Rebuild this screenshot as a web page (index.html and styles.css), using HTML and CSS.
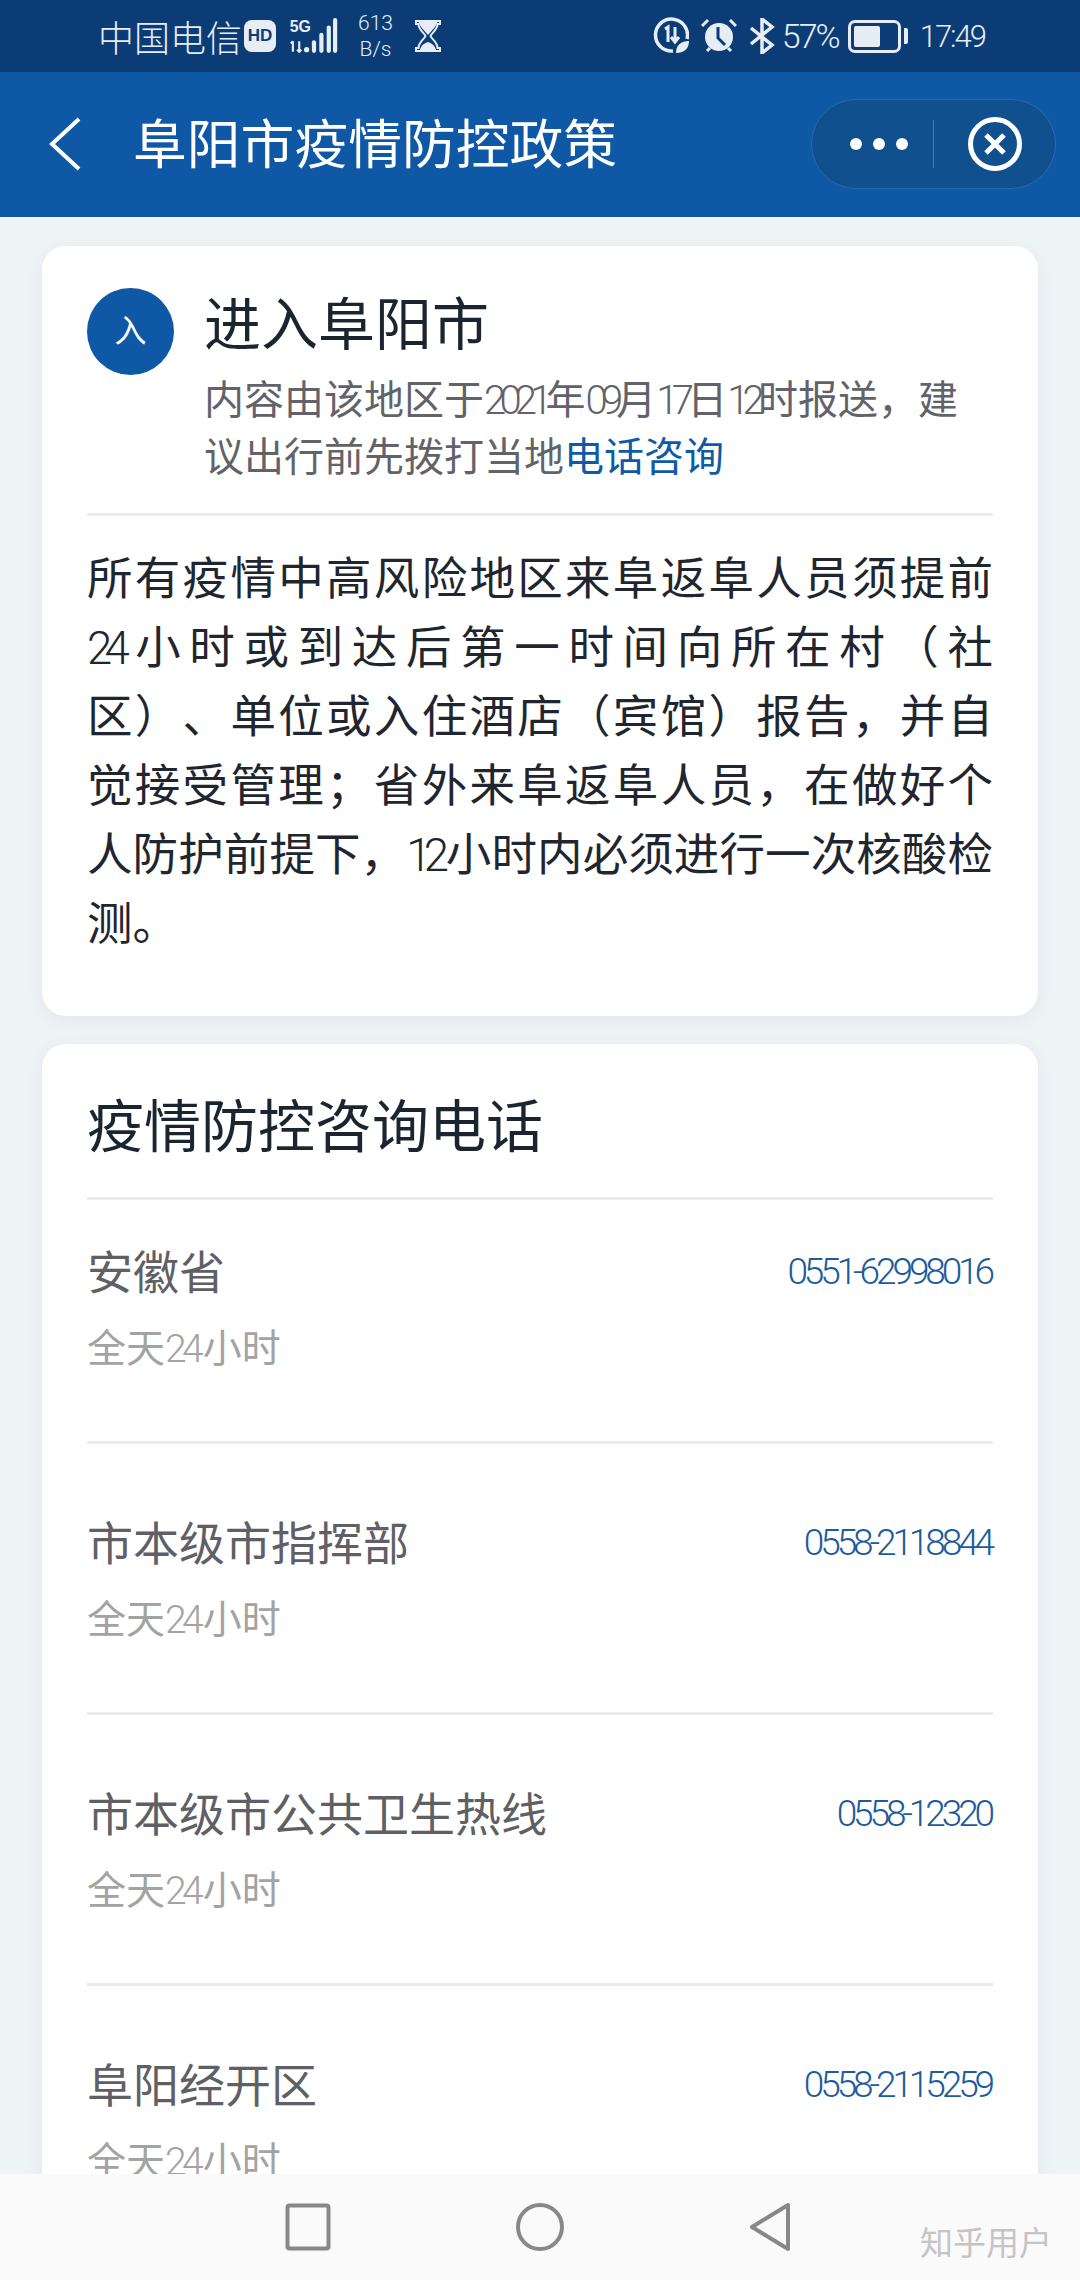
FILE: index.html
```html
<!DOCTYPE html>
<html lang="zh-CN">
<head>
    <meta charset="UTF-8">
    <title>阜阳市疫情防控政策</title>
    <link rel="stylesheet" href="styles.css">
</head>
<body>
<div class="statusbar">
    <div class="status-left">
        <span class="carrier">中国电信</span>
        <span class="hd">HD</span>
        <svg class="signal" width="52" height="38" viewBox="0 0 46 36">
            <text x="0" y="14" class="sig-text">5G</text>
            <path d="M3 23v10M1 25l2-2M9 23v10M7 31l2 2 2-2" stroke="#e6edf5" stroke-width="2" fill="none"/>
            <circle cx="16" cy="31" r="2.5" fill="#e6edf5"/>
            <rect x="21" y="22" width="4" height="12" rx="2" fill="#e6edf5"/>
            <rect x="28" y="15" width="4" height="19" rx="2" fill="#e6edf5"/>
            <rect x="35" y="8" width="4" height="26" rx="2" fill="#e6edf5"/>
            <rect x="41" y="1" width="4" height="33" rx="2" fill="#e6edf5"/>
        </svg>
        <span class="speed"><span>613</span><span>B/s</span></span>
        <svg width="26" height="34" viewBox="0 0 26 34">
            <path d="M1 2h24v3h-2.500c0 6-6 9-7 12 1 3 7 6 7 12h2.500v3h-24v-3h2.500c0-6 6-9 7-12-1-3-7-6-7-12h-2.500z" fill="none" stroke="#e6edf5" stroke-width="2"/>
            <path d="M3 2h20l-3 6-7 8-7-8zM5 31c1-5 5-7 8-8 3 1 7 3 8 8z" fill="#e6edf5"/>
        </svg>
    </div>
    <div class="status-right">
        <svg width="36" height="38" viewBox="0 0 36 38">
            <path d="M20 34a16 16 0 1 1 14-12" fill="none" stroke="#e6edf5" stroke-width="3.500"/>
            <path d="M12 12l3-2v15M22 10v14M18 20l4 5 4-5" fill="none" stroke="#e6edf5" stroke-width="3"/>
            <path d="M23 36c0-8 5-12 13-12 0 8-5 12-13 12z" fill="#e6edf5"/>
        </svg>
        <svg width="36" height="36" viewBox="0 0 36 36">
            <circle cx="18" cy="19" r="14" fill="#e6edf5"/>
            <path d="M17 9v11l7 7" fill="none" stroke="#0c3c75" stroke-width="3"/>
            <path d="M1 8l6-6M35 8l-6-6M6 33l3-3M30 33l-3-3" stroke="#e6edf5" stroke-width="3"/>
        </svg>
        <svg class="bt" width="26" height="36" viewBox="0 0 26 36">
            <path d="M2 10l21 17-10 8V1l10 8L2 26" fill="none" stroke="#e6edf5" stroke-width="3.500"/>
        </svg>
        <span class="percent">57%</span>
        <span class="battery"><span class="battery-level"></span></span>
        <span class="battery-cap"></span>
        <span class="clock">17:49</span>
    </div>
</div>

<div class="navbar">
    <svg class="back" width="34" height="54" viewBox="0 0 34 54">
        <path d="M31 2L4 27l27 25" fill="none" stroke="#fff" stroke-width="4"/>
    </svg>
    <div class="nav-title">阜阳市疫情防控政策</div>
    <div class="capsule">
        <div class="dots"><i></i><i></i><i></i></div>
        <div class="capsule-line"></div>
        <svg width="56" height="56" viewBox="0 0 56 56">
            <circle cx="28" cy="28" r="24.500" fill="none" stroke="#fff" stroke-width="5"/>
            <path d="M19 19l18 18M37 19L19 37" stroke="#fff" stroke-width="5"/>
        </svg>
    </div>
</div>

<div class="content">
    <div class="card card-entry">
        <div class="entry-head">
            <div class="badge">入</div>
            <div class="entry-text">
                <div class="card-title">进入阜阳市</div>
                <div class="entry-sub">
                    <div>内容由该地区于<span class="num">2021</span>年<span class="num">09</span>月<span class="num">17</span>日<span class="num">12</span>时报送，建</div>
                    <div>议出行前先拨打当地<span class="link">电话咨询</span></div>
                </div>
            </div>
        </div>
        <div class="policy">
            <div>所有疫情中高风险地区来阜返阜人员须提前</div>
            <div><span class="num">24</span>小时或到达后第一时间向所在村（社</div>
            <div>区）、单位或入住酒店（宾馆）报告，并自</div>
            <div>觉接受管理；省外来阜返阜人员，在做好个</div>
            <div>人防护前提下，<span class="num">12</span>小时内必须进行一次核酸检</div>
            <div>测。</div>
        </div>
    </div>

    <div class="card card-phones">
        <div class="card-title phones-title">疫情防控咨询电话</div>
        <div class="row">
            <div class="row-main"><span class="row-name">安徽省</span><span class="row-phone">0551-62998016</span></div>
            <div class="row-sub">全天<span class="num">24</span>小时</div>
        </div>
        <div class="row">
            <div class="row-main"><span class="row-name">市本级市指挥部</span><span class="row-phone">0558-2118844</span></div>
            <div class="row-sub">全天<span class="num">24</span>小时</div>
        </div>
        <div class="row">
            <div class="row-main"><span class="row-name">市本级市公共卫生热线</span><span class="row-phone">0558-12320</span></div>
            <div class="row-sub">全天<span class="num">24</span>小时</div>
        </div>
        <div class="row">
            <div class="row-main"><span class="row-name">阜阳经开区</span><span class="row-phone">0558-2115259</span></div>
            <div class="row-sub">全天<span class="num">24</span>小时</div>
        </div>
    </div>
</div>

<div class="bottombar">
    <svg width="46" height="48" viewBox="0 0 46 48"><rect x="2.500" y="2.500" width="41" height="43" rx="2" fill="none" stroke="#888" stroke-width="4"/></svg>
    <svg width="48" height="50" viewBox="0 0 48 50"><circle cx="24" cy="25" r="22" fill="none" stroke="#888" stroke-width="4"/></svg>
    <svg width="42" height="50" viewBox="0 0 42 50"><path d="M39 3v44L3 25z" fill="none" stroke="#888" stroke-width="4" stroke-linejoin="round"/></svg>
</div>
<div class="watermark">知乎用户</div>
</body>
</html>
```

FILE: styles.css
```css
* { box-sizing: border-box; }
html, body { margin: 0; padding: 0; }
body {
    position: relative;
    width: 1080px;
    height: 2280px;
    overflow: hidden;
    display: flex;
    flex-direction: column;
    background: #eef3f6;
    font-family: Roboto, "Noto Sans CJK SC", sans-serif;
    font-weight: 400;
    text-spacing-trim: space-all;
}

.statusbar { height: 72px; flex: none; background: #0c3c75; color: #e6edf5; display: flex; justify-content: space-between; align-items: center; padding: 0 95px 0 98px; font-weight: 300; }
.status-left, .status-right { display: flex; align-items: center; }
.carrier { font-size: 36px; width: 146px; }
.hd { width: 32px; height: 32px; border-radius: 8px; background: #e6edf5; color: #0c3c75; font: bold 17px/32px "Liberation Sans", sans-serif; text-align: center; margin-right: 12px; }
.sig-text { font: bold 15px "Liberation Sans", sans-serif; fill: #e6edf5; }
.signal { margin-right: 18px; }
.speed { display: flex; flex-direction: column; align-items: center; font-size: 21px; line-height: 26px; margin-right: 22px; }
.status-right svg { margin-right: 12px; }
.status-right .bt { margin-right: 7px; }
.percent { font-size: 34px; letter-spacing: -2px; margin-right: 9px; }
.battery { width: 53px; height: 33px; border: 3px solid #e6edf5; border-radius: 7px; padding: 3px; display: block; }
.battery-level { display: block; width: 26px; height: 100%; background: #e6edf5; border-radius: 2px; }
.battery-cap { width: 4px; height: 16px; background: #e6edf5; margin: 0 12px 0 3px; border-radius: 0 2px 2px 0; }
.clock { font-size: 31px; letter-spacing: -2px; }

.navbar { height: 145px; flex: none; background: #0f58a6; color: #fff; display: flex; align-items: center; padding: 0 24px 0 48px; }
.back { margin-top: -2px; }
.nav-title { flex: 1; font-size: 53.800px; margin-left: 51px; margin-top: -9px; }
.capsule { width: 245px; height: 90px; border-radius: 45px; background: #10508f; border: 1px solid #2a68ae; display: flex; align-items: center; padding-left: 38px; margin-top: -2px; }
.dots { display: flex; gap: 11px; }
.dots i { width: 12px; height: 12px; border-radius: 50%; background: #fff; display: block; }
.capsule-line { width: 1px; height: 48px; background: #3f7cc0; margin: 0 33px 0 25px; }

.content { flex: 1; min-height: 0; overflow: hidden; padding: 29px 42px 0; }
.card { background: #fff; border-radius: 24px; padding: 0 45px; box-shadow: 0 4px 16px rgba(60, 90, 110, 0.07); }
.card-entry { height: 770px; padding-top: 40px; margin-bottom: 28px; }
.entry-head { display: flex; gap: 30px; padding-bottom: 27px; border-bottom: 3px solid #ebebeb; }
.badge { width: 87px; height: 87px; flex: none; margin-top: 2px; border-radius: 50%; background: #0f58a6; color: #fff; font-size: 32px; line-height: 87px; text-align: center; }
.card-title { font-size: 57px; line-height: 80px; color: #1a2530; }
.entry-sub { font-size: 40px; line-height: 57px; color: #626369; margin-top: 6px; }
.entry-sub .num { margin-right: 0; }
.link { color: #0f5aa5; }
.policy { margin-top: 29px; font-size: 45.500px; line-height: 69px; color: #1f2630; }
.policy div { text-align: justify; text-align-last: justify; }
.policy div:last-child { text-align-last: left; }
.num { font-weight: 300; letter-spacing: -0.170em; margin-right: 0.100em; }

.card-phones { padding-top: 44px; height: 1200px; }
.phones-title { padding-bottom: 29px; }
.row { border-top: 3px solid #ebebeb; padding: 68px 0 65px; }
.phones-title + .row { padding-top: 41px; }
.row-main { display: flex; justify-content: space-between; align-items: center; height: 60px; }
.row-name { font-size: 46px; color: #5f6066; margin-top: -5px; }
.row-phone { font-size: 37px; font-weight: 300; color: #1c5c9c; letter-spacing: -4.100px; margin-right: 2px; }
.row-sub { margin-top: 21px; font-size: 39px; line-height: 54px; color: #a3a3a3; }
.row-sub .num { letter-spacing: -0.120em; }

.bottombar { height: 106px; flex: none; background: #fafafa; display: flex; align-items: center; justify-content: center; gap: 185px; padding-right: 4px; }
.watermark { position: absolute; left: 920px; top: 2224px; font-size: 33px; line-height: 40px; color: #c4c4c4; }
```
